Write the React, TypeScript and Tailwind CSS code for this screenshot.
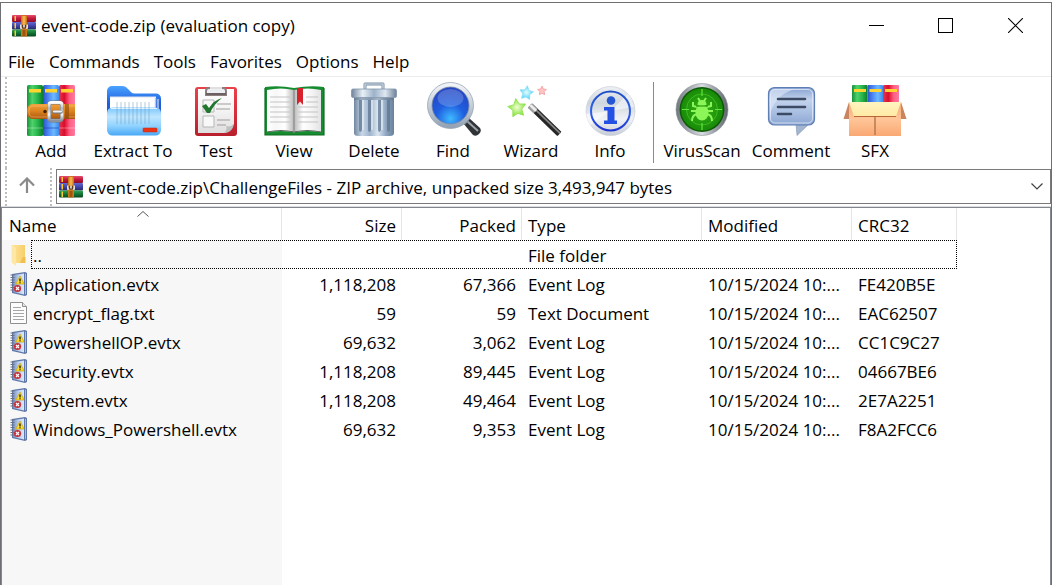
import type { ReactNode } from "react";

function Gradient({ id, stops, vertical }: { id: string; stops: string[]; vertical?: boolean }) {
  return (
    <linearGradient id={id} x1="0" y1="0" x2={vertical ? "0" : "1"} y2={vertical ? "1" : "0"}>
      {stops.map((color, i) => (
        <stop key={i} offset={i / (stops.length - 1)} stopColor={color} />
      ))}
    </linearGradient>
  );
}

function SharedDefs() {
  return (
    <svg width="0" height="0" className="absolute" aria-hidden="true">
      <defs>
        <Gradient id="bookGreen" stops={["#17913a", "#4fd26b", "#28b44b", "#0b7d2b"]} />
        <Gradient id="bookBlue" stops={["#2b54c8", "#4c86f5", "#6eb9ff", "#3b8cf0"]} />
        <Gradient id="bookRed" stops={["#e8384f", "#d90c2c", "#ff5f83", "#ff7ba0"]} />
        <Gradient id="belt" vertical stops={["#f2a33c", "#d9811e", "#a9560f"]} />
        <Gradient id="metal" vertical stops={["#ffffff", "#b4b8bf", "#f4f5f7", "#8d929b"]} />
        <Gradient id="folderBack" vertical stops={["#4aa3ff", "#1c5fe0", "#2d55d8"]} />
        <Gradient id="folderFront" vertical stops={["#7cc7ff", "#c0e6ff", "#8ed2ff", "#49a8f5"]} />
        <Gradient id="clipRed" vertical stops={["#e8424a", "#d8303a", "#b81f2c"]} />
        <Gradient id="paper" vertical stops={["#ffffff", "#f3f3f3", "#dedede"]} />
        <Gradient id="pageLeft" stops={["#ffffff", "#f7f7f7", "#ffffff", "#b8b8b8"]} />
        <Gradient id="pageRight" stops={["#b8b8b8", "#ffffff", "#f4f4f4", "#e2e2e2"]} />
        <Gradient id="can" stops={["#71869f", "#c9d8e8", "#9fb4cc", "#dbe6f1", "#8ea6c1", "#6a809b"]} />
        <Gradient id="canLid" stops={["#70839b", "#e8f0f7", "#9db2c9", "#dfe8f1", "#6c8098"]} />
        <Gradient id="glassRim" vertical stops={["#f6f8fa", "#c5ced8", "#90a0b2"]} />
        <radialGradient id="lens" cx=".5" cy=".85" r=".85">
          <stop offset="0" stopColor="#3fbaff" />
          <stop offset=".45" stopColor="#1f5fe0" />
          <stop offset="1" stopColor="#2443c0" />
        </radialGradient>
        <radialGradient id="starGreen"><stop offset="0" stopColor="#efffd0" /><stop offset="1" stopColor="#86e23c" /></radialGradient>
        <radialGradient id="starBlue"><stop offset="0" stopColor="#e5fcff" /><stop offset="1" stopColor="#5bd5f5" /></radialGradient>
        <Gradient id="disc" vertical stops={["#eef1f5", "#d0d6de", "#f0f2f5", "#c7cdd6"]} />
        <Gradient id="infoBlue" vertical stops={["#1e4fc4", "#2d5ff0", "#1f35d0"]} />
        <Gradient id="virusRim" stops={["#6f767d", "#d9dde1", "#5c6268"]} />
        <radialGradient id="virusGreen"><stop offset="0" stopColor="#34b416" /><stop offset="1" stopColor="#188a08" /></radialGradient>
        <Gradient id="bubble" vertical stops={["#86a2d2", "#c3d3ec", "#a9bfe2", "#8ca6d2"]} />
        <Gradient id="boxFront" vertical stops={["#f5a870", "#ffc598", "#f9a873"]} />
        <Gradient id="boxFlap" vertical stops={["#fff4c0", "#ffe9a4"]} />
        <Gradient id="barRed" vertical stops={["#e8506c", "#c2183c", "#8c0d2a"]} />
        <Gradient id="barBlue" vertical stops={["#6468d0", "#4146a8", "#232763"]} />
        <Gradient id="barGreen" vertical stops={["#2fa352", "#137535", "#07461c"]} />
        <Gradient id="folderSmall" stops={["#ffe49a", "#f7cf6a"]} />
        <Gradient id="logCover" stops={["#7b93c4", "#b9cdec", "#dce8f8"]} />
      </defs>
    </svg>
  );
}

function Glyph({ children }: { children: ReactNode }) {
  return (
    <svg viewBox="0 0 64 54" className="h-[54px] w-16 shrink-0" aria-hidden="true">
      {children}
    </svg>
  );
}

const AddIcon = () => (
  <Glyph>
    <rect x="8" y="3" width="16" height="51" rx="1.500" fill="url(#bookGreen)" />
    <rect x="24" y="3" width="16" height="51" rx="1.500" fill="url(#bookBlue)" />
    <rect x="40" y="3" width="16" height="51" rx="1.500" fill="url(#bookRed)" />
    <path d="M10 7h12v3.500h-12zM26 7h12v3.500h-12zM42 7h12v3.500h-12z" fill="#ffd42e" />
    <path d="M8 46h16M40 46h16" stroke="#fff" strokeOpacity=".35" />
    <path d="M24 46h16" stroke="#1c3da8" strokeOpacity=".6" />
    <path d="M14 22h42v15H14q-6 0-6-7.500t6-7.500z" fill="url(#belt)" />
    <path d="M14 24q-4 0-4 5.500t4 5.500h18M14 24h18M49 24h7M49 35h7" fill="none" stroke="#ffc67a" strokeOpacity=".7" strokeWidth=".7" />
    <path d="M46 22h4v15h-4z" fill="#8a460b" opacity=".6" />
    <circle cx="26" cy="29.500" r="1.700" fill="#3b2208" />
    <rect x="30" y="20.500" width="13" height="18" rx="2.500" fill="none" stroke="#73767c" strokeWidth="4" />
    <rect x="30" y="20.500" width="13" height="18" rx="2.500" fill="none" stroke="url(#metal)" strokeWidth="3" />
    <path d="M35 30h7" stroke="#74777c" strokeWidth="3.500" strokeLinecap="round" />
    <path d="M35 29.500h7" stroke="#f0f1f3" strokeWidth="2.200" strokeLinecap="round" />
  </Glyph>
);

const ExtractIcon = () => (
  <Glyph>
    <path d="M6 9a5 5 0 0 1 5-5h10c3 0 4 1 6 3l3 3q1 1.500 4 1.500h21a5 5 0 0 1 5 5V38H6z" fill="url(#folderBack)" />
    <path d="M9 15h46v24H9z" fill="#fff" />
    <path d="M54.500 16v12M57 17v12" stroke="#b9c8dd" strokeWidth="1.500" />
    <path d="M9 15h46" stroke="#dbe3ee" />
    <rect x="6" y="25.500" width="54" height="28" rx="5.500" fill="url(#folderFront)" />
    <path d="M10 26.500h46" stroke="#e5f5ff" strokeWidth="1.200" />
    <path d="M16 20v22M20 20v22M24 20v22M28 20v22M32 20v22M36 20v22M40 20v22M44 20v22M48 20v22" stroke="#6f9ab8" strokeOpacity=".4" strokeWidth="1.300" />
    <rect x="42" y="46" width="14" height="4" rx=".6" fill="#ea3316" stroke="#c92b12" strokeWidth=".5" />
  </Glyph>
);

const TestIcon = () => (
  <Glyph>
    <rect x="11" y="5" width="42" height="49" rx="3" fill="url(#clipRed)" />
    <path d="M14 7h36v35l-8 9H14z" fill="url(#paper)" />
    <path d="M50 42c-1 6-5 9-10 9 3-3 3-5 2-7 3 1 6 0 8-2z" fill="#bfbfbf" />
    <path d="M22 13V9a3 3 0 0 1 3-3h14a3 3 0 0 1 3 3v4z" fill="#eceff1" stroke="#8c7f80" strokeWidth="2" />
    <path d="M22 12h20" stroke="#6b6163" strokeWidth="2" />
    <path d="M26 6h12" stroke="#fff" strokeWidth="1.500" />
    <path d="M19 18h11v12H19zM19 34h11v11H19z" fill="#f8f8f8" stroke="#b7b7b7" />
    <path d="M33 22h14M32 27h14M33 38h13M33 43h9" stroke="#a59c9c" strokeWidth="1.200" />
    <path d="M18 24l4-2 3 4q5-8 13-10-8 6-12 15h-3z" fill="#22772f" />
  </Glyph>
);

const ViewIcon = () => (
  <Glyph>
    <path d="M3 5q14-2 29 1 16-3 30-1v48H3z" fill="#168c30" />
    <path d="M3 6v47h59V6" fill="none" stroke="#0e6c22" strokeWidth="1.200" />
    <path d="M5 8q14-3 27 0v42q-13-2-27 0z" fill="url(#pageLeft)" />
    <path d="M32 8q14-3 27 0v42q-13-2-27 0z" fill="url(#pageRight)" />
    <path d="M5 50q14-3 27 0 13-3 27 0" fill="none" stroke="#5f5f5f" strokeWidth="1.200" />
    <path d="M32 8v43" stroke="#8b8b8b" strokeWidth="1.200" />
    <path d="M8 15h20M8 20h20M8 25h20M8 30h20M8 35h20M8 40h20M44 15h12M44 20h12M36 25h20M36 30h20M36 35h20M36 40h20" stroke="#c3c3c3" strokeWidth="1.200" />
    <path d="M35 6h6v17l-3-3.500-3 3.500z" fill="#d8212a" />
  </Glyph>
);

const DeleteIcon = () => (
  <Glyph>
    <path d="M23 8V2h18v6" fill="none" stroke="#7c8fa5" strokeWidth="3" strokeLinejoin="round" />
    <path d="M23 8V2h18v6" fill="none" stroke="#d2dde8" strokeWidth="1.200" />
    <path d="M12 14h40v37q0 3-4 3H16q-4 0-4-3z" fill="url(#can)" />
    <path d="M17 18v30q1 4 3 0V18zM26 18v30q1 4 3 0V18zM36 18v30q1 4 3 0V18zM45 18v30q1 4 3 0V18z" fill="#5e7590" opacity=".75" />
    <path d="M21 18v30M30 18v30M40 18v30" stroke="#e8f0f8" strokeWidth="1.200" />
    <rect x="9.500" y="7" width="45" height="8.500" rx="1.500" fill="url(#canLid)" stroke="#8194aa" strokeWidth=".8" />
    <path d="M12 17h40" stroke="#53677e" strokeOpacity=".5" strokeWidth="1.500" />
  </Glyph>
);

const FindIcon = () => (
  <Glyph>
    <path d="M42 41l6-5 11 10q2 3-1 6t-6 1z" fill="#303338" />
    <path d="M46 39l11 10" stroke="#9ea3aa" strokeWidth="2" />
    <path d="M41 40l5-5 3 2-5 6z" fill="#777d86" />
    <circle cx="29.500" cy="23.500" r="23" fill="url(#glassRim)" stroke="#97a5b5" strokeWidth=".8" />
    <circle cx="29.500" cy="23.500" r="18.500" fill="url(#lens)" stroke="#7b8aa5" strokeWidth=".8" />
    <ellipse cx="29.500" cy="16" rx="13" ry="9" fill="#fff" opacity=".2" />
  </Glyph>
);

const STAR = "M0-10L3-3.500 10-2.500 5 2.500 6 9.500 0 6.500-6 9.500-5 2.500-10-2.500-3-3.500z";

const WizardIcon = () => (
  <Glyph>
    <path d={STAR} transform="translate(18 25.500) rotate(-8) scale(.9)" fill="url(#starGreen)" stroke="#95e35a" strokeWidth="1" />
    <path d={STAR} transform="translate(27.500 10.500) rotate(8) scale(.68)" fill="url(#starBlue)" stroke="#7ddcf5" strokeWidth="1" />
    <path d={STAR} transform="translate(43 8.500) scale(.44)" fill="#ffc4c4" stroke="#f08d8d" strokeWidth="1.500" />
    <g transform="translate(31 23.500) rotate(44)">
      <rect x="0" y="-3" width="41" height="6" rx="1" fill="#262626" />
      <rect x="0" y="-1.800" width="41" height="1.800" fill="#858585" />
      <rect x="0" y="-3" width="8" height="6" fill="#a2a2a2" />
      <rect x="0" y="-1.800" width="8" height="2.600" fill="#eeeeee" />
    </g>
  </Glyph>
);

const InfoIcon = () => (
  <Glyph>
    <circle cx="32.500" cy="29" r="24.500" fill="url(#disc)" stroke="#c4cad3" strokeWidth=".6" />
    <path d="M32.500 29L50 12a24 24 0 0 1 6 13zM32.500 29L12 43a24 24 0 0 1-4-11z" fill="#fff" opacity=".5" />
    <circle cx="32.500" cy="29" r="19.500" fill="none" stroke="url(#infoBlue)" strokeWidth="2" />
    <circle cx="33" cy="18.500" r="4.300" fill="#2456d4" />
    <path d="M26 25h10.500v13.500H39V42H26v-3.500h3.500V28.500H26z" fill="#2550e4" />
  </Glyph>
);

const VirusIcon = () => (
  <Glyph>
    <circle cx="32" cy="27.500" r="26" fill="url(#virusRim)" stroke="#8b9197" strokeWidth=".6" />
    <circle cx="32" cy="27.500" r="22.500" fill="#0d5a06" />
    <circle cx="32" cy="27.500" r="21" fill="url(#virusGreen)" />
    <circle cx="32" cy="27.500" r="15.500" fill="none" stroke="#4bd22c" strokeOpacity=".6" />
    <path d="M32 7v7M32 41v7M12 27.500h7M45 27.500h7" stroke="#63e63c" strokeWidth="1.200" />
    <path d="M27 25l-4-1v-4M37 25l4-1v-4M27 29h-6M37 29h6M27 32q-5 1-5 7M37 32q5 1 5 7M30 19l-2-3M34 19l2-3" fill="none" stroke="#8cf558" strokeWidth="2" />
    <ellipse cx="32" cy="30.500" rx="6.500" ry="8" fill="#8cf558" />
    <path d="M27.500 23q0-5 4.500-5t4.500 5z" fill="#8cf558" />
    <path d="M26 24h12" stroke="#279a12" strokeWidth="1.200" />
  </Glyph>
);

const CommentIcon = () => (
  <Glyph>
    <path d="M37 42h13L38 53.500z" fill="#a3b5cf" stroke="#8196b5" strokeWidth=".6" />
    <rect x="9.500" y="5.500" width="46" height="37.500" rx="6" fill="url(#bubble)" stroke="#5f7fb4" strokeWidth="1.200" />
    <path d="M11 32V12q0-5 5-5h20Q17 12 11 32z" fill="#dce7f7" opacity=".65" />
    <rect x="11.500" y="7.500" width="42" height="33.500" rx="4.500" fill="none" stroke="#e1eaf8" strokeOpacity=".8" />
    <path d="M19 17h27M19 25h27M19 32h13" stroke="#3c4b63" strokeWidth="2.600" strokeLinecap="round" />
  </Glyph>
);

const SfxIcon = () => (
  <Glyph>
    <rect x="9" y="3" width="15.500" height="20" rx="1" fill="url(#bookGreen)" />
    <rect x="24.500" y="3" width="15.500" height="20" rx="1" fill="url(#bookBlue)" />
    <rect x="40" y="3" width="16" height="20" rx="1" fill="url(#bookRed)" />
    <path d="M11 7h12v3H11zM26.500 7h12v3h-12zM42 7h12v3H42z" fill="#ffd42e" />
    <path d="M6 20L.5 37H8zM58 20l5.500 17H56z" fill="#c98560" />
    <path d="M6 20h52v34H6z" fill="url(#boxFront)" />
    <path d="M32 35v18" stroke="#b9784e" strokeWidth="1.500" />
    <path d="M6 20h52l-5 14.500H11z" fill="url(#boxFlap)" />
    <path d="M11 34.500h42" stroke="#b9673a" strokeWidth="1.200" />
  </Glyph>
);

const ArchiveIcon = () => (
  <svg viewBox="0 0 24 22" className="h-[22px] w-6 shrink-0" aria-hidden="true">
    <rect x="0" y="0" width="24" height="7" rx="1" fill="url(#barRed)" />
    <rect x="0" y="7" width="24" height="7.500" rx="1" fill="url(#barBlue)" />
    <rect x="0" y="14.500" width="24" height="7" rx="1" fill="url(#barGreen)" />
    <path d="M2.500 1h1.500v5H2.500zM2.500 8h1.500v5.500H2.500zM2.500 15.500h1.500V21H2.500z" fill="#ffcb2e" />
    <path d="M9 1q3-2 6 0v20.500H9z" fill="#c97a1b" />
    <path d="M10.500 1h3v8h-3z" fill="#f3b04a" />
    <path d="M10.500 15h3v6h-3z" fill="#9c5510" />
    <path d="M8.700 9.500v3.500h2M15.300 9.500v3.500h-2" fill="none" stroke="#e2e2e2" strokeWidth="1.400" />
    <path d="M10 10h4v3.500h-4z" fill="#5b3a1e" />
    <path d="M12 9.500v3" stroke="#fff" strokeWidth="1.400" />
  </svg>
);

const FolderSmall = () => (
  <svg viewBox="0 0 20 24" className="h-6 w-5 shrink-0" aria-hidden="true">
    <path d="M3 2h13v18H3z" fill="url(#folderSmall)" />
    <path d="M14 14h2.500v6H11z" fill="#f0bf4d" />
    <path d="M2.500 2L7 5v18l-4.500-3.500z" fill="#ffe8a6" />
  </svg>
);

const EventLogSmall = () => (
  <svg viewBox="0 0 20 24" className="h-6 w-5 shrink-0" aria-hidden="true">
    <path d="M3 2l13-2 2 1v22l-2 1-13-3z" fill="#5e76a8" />
    <path d="M4 3l11-1.500v21L4 20z" fill="url(#logCover)" />
    <path d="M16 1.500l1 .5v20l-1 .5z" fill="#a8bde0" />
    <path d="M1.500 3h4M1.500 5.500h4M1.500 8h4M1.500 10.500h4M1.500 13h4M1.500 15.500h4M1.500 18h4" stroke="#6a7280" strokeWidth="1" />
    <path d="M11 4l4.200 8H6.800z" fill="#ffe02e" stroke="#c9a20c" strokeWidth=".7" strokeLinejoin="round" />
    <path d="M11 6.500v3M11 10.300v1" stroke="#111" strokeWidth="1.300" />
    <circle cx="8.500" cy="16.500" r="3.600" fill="#c8303a" />
    <path d="M7 15l3 3M10 15l-3 3" stroke="#fff" strokeWidth="1.200" />
  </svg>
);

const TextSmall = () => (
  <svg viewBox="0 0 20 24" className="h-6 w-5 shrink-0" aria-hidden="true">
    <path d="M1.500 1.500h12l4 4v17h-16z" fill="#fcfcfc" stroke="#8f8f8f" />
    <path d="M13.500 1.500v4h4" fill="#e8e8e8" stroke="#8f8f8f" />
    <path d="M4 6.500h8M4 9.500h11M4 12.500h11M4 15.500h11M4 18.500h11" stroke="#a6a6a6" />
  </svg>
);

const MENUS = ["File", "Commands", "Tools", "Favorites", "Options", "Help"];

const TOOLS = [
  { label: "Add", width: "w-[78px]", icon: <AddIcon /> },
  { label: "Extract To", width: "w-[86px]", icon: <ExtractIcon /> },
  { label: "Test", width: "w-20", icon: <TestIcon /> },
  { label: "View", width: "w-[76px]", icon: <ViewIcon /> },
  { label: "Delete", width: "w-[84px]", icon: <DeleteIcon /> },
  { label: "Find", width: "w-[74px]", icon: <FindIcon /> },
  { label: "Wizard", width: "w-[82px]", icon: <WizardIcon /> },
  { label: "Info", width: "w-[76px]", icon: <InfoIcon /> },
];

const EXTRA_TOOLS = [
  { label: "VirusScan", width: "w-[86px]", icon: <VirusIcon /> },
  { label: "Comment", width: "w-[92px]", icon: <CommentIcon /> },
  { label: "SFX", width: "w-[76px]", icon: <SfxIcon /> },
];

const DATE = "10/15/2024 10:...";

const FILES = [
  { name: "Application.evtx", size: "1,118,208", packed: "67,366", type: "Event Log", crc: "FE420B5E" },
  { name: "encrypt_flag.txt", size: "59", packed: "59", type: "Text Document", crc: "EAC62507" },
  { name: "PowershellOP.evtx", size: "69,632", packed: "3,062", type: "Event Log", crc: "CC1C9C27" },
  { name: "Security.evtx", size: "1,118,208", packed: "89,445", type: "Event Log", crc: "04667BE6" },
  { name: "System.evtx", size: "1,118,208", packed: "49,464", type: "Event Log", crc: "2E7A2251" },
  { name: "Windows_Powershell.evtx", size: "69,632", packed: "9,353", type: "Event Log", crc: "F8A2FCC6" },
];

function ToolButton({ label, width, icon }: { label: string; width: string; icon: ReactNode }) {
  return (
    <button type="button" className={`flex shrink-0 flex-col items-center gap-[5px] ${width}`}>
      {icon}
      <span className="whitespace-nowrap leading-5">{label}</span>
    </button>
  );
}

function Grip() {
  return <div className="w-0 shrink-0 self-stretch border-l-2 border-dotted border-[#bdbdbd]" />;
}

export default function App() {
  return (
    <div className="flex min-h-screen flex-col bg-white pr-[3px] pt-0.5 font-['Open_Sans','Noto_Sans',sans-serif] text-[17px] leading-5 text-black">
      <SharedDefs />
      <div className="flex grow flex-col border-x border-t border-[#6f7073]">
        <header className="flex h-[45px] items-center pl-[11px]">
          <ArchiveIcon />
          <h1 className="grow pl-[5px]">event-code.zip (evaluation copy)</h1>
          <button type="button" aria-label="Minimize" className="flex h-full w-[69px] items-center justify-center">
            <span className="h-px w-[15px] bg-black" />
          </button>
          <button type="button" aria-label="Maximize" className="flex h-full w-[69px] items-center justify-center">
            <span className="size-[15px] border border-black" />
          </button>
          <button type="button" aria-label="Close" className="flex h-full w-[71px] items-center justify-center">
            <svg viewBox="0 0 15 15" className="size-[15px]" aria-hidden="true">
              <path d="M0 0l15 15M15 0L0 15" stroke="#000" strokeWidth="1.100" />
            </svg>
          </button>
        </header>

        <nav className="flex h-7 items-center">
          {MENUS.map((menu) => (
            <button key={menu} type="button" className="px-[7px]">
              {menu}
            </button>
          ))}
        </nav>

        <div className="flex h-[92px] border-t border-[#ededed] pl-1">
          <Grip />
          <div className="flex items-start pl-[5px] pt-[5px]">
            {TOOLS.map((tool) => (
              <ToolButton key={tool.label} {...tool} />
            ))}
            <div className="mx-[5px] h-[81px] w-px bg-[#8a8a8a]" />
            {EXTRA_TOOLS.map((tool) => (
              <ToolButton key={tool.label} {...tool} />
            ))}
          </div>
        </div>

        <div className="flex h-[39px] border-b border-[#dcdcdc] pl-1">
          <Grip />
          <button type="button" aria-label="Up one level" className="flex w-[43px] items-center justify-center pb-1 pr-[3px]">
            <svg viewBox="0 0 16 16" className="size-4" aria-hidden="true">
              <path d="M8 16V1.500M1 8.500l7-7 7 7" fill="none" stroke="#8a8a8a" strokeWidth="2.200" />
            </svg>
          </button>
          <Grip />
          <div className="mb-0.5 mt-px ml-1 flex grow items-center border border-[#7a7a7a] pl-0.5">
            <ArchiveIcon />
            <input
              aria-label="Current path"
              readOnly
              value="event-code.zip\ChallengeFiles - ZIP archive, unpacked size 3,493,947 bytes"
              className="ml-[5px] h-full min-w-0 grow bg-transparent pt-0.5 outline-none"
            />
            <button type="button" aria-label="Show path history" className="flex h-full w-[26px] items-center justify-center">
              <svg viewBox="0 0 12 7" className="h-[7px] w-3" aria-hidden="true">
                <path d="M.5.500L6 6 11.500.500" fill="none" stroke="#404040" strokeWidth="1.200" />
              </svg>
            </button>
          </div>
        </div>

        <main className="flex grow flex-col border-x border-t border-[#828790] bg-[linear-gradient(to_right,#f7f7f7_280px,#ffffff_280px)]">
          <table className="w-full table-fixed border-separate border-spacing-0 text-left">
            <colgroup>
              <col className="w-[280px]" />
              <col className="w-[120px]" />
              <col className="w-[120px]" />
              <col className="w-[180px]" />
              <col className="w-[150px]" />
              <col className="w-[105px]" />
              <col />
            </colgroup>
            <thead>
              <tr className="h-8 bg-white *:border-r *:border-[#e5e5e5] *:pt-1 *:font-normal">
                <th className="relative pl-[7px]">
                  Name
                  <svg viewBox="0 0 12 6" className="absolute left-[135px] top-[3px] h-1.5 w-3" aria-hidden="true">
                    <path d="M.5 5.500L6 .500l5.500 5" fill="none" stroke="#555" />
                  </svg>
                </th>
                <th className="pr-[5px] text-right">Size</th>
                <th className="pr-[5px] text-right">Packed</th>
                <th className="pl-1.5">Type</th>
                <th className="pl-1.5">Modified</th>
                <th className="pl-1.5">CRC32</th>
                <td className="border-r-0!" />
              </tr>
            </thead>
            <tbody>
              <tr className="h-[29px]">
                <td className="relative pl-[7px]">
                  <div className="flex items-center gap-1">
                    <FolderSmall />
                    <span className="pt-0.5">..</span>
                  </div>
                  <div className="pointer-events-none absolute inset-y-0 left-[29px] w-[926px] border border-dotted border-black" />
                </td>
                <td />
                <td />
                <td className="pl-1.5 pt-0.5">File folder</td>
                <td />
                <td />
                <td />
              </tr>
              {FILES.map((file) => (
                <tr key={file.name} className="h-[29px] whitespace-nowrap *:pt-0.5">
                  <td className="pl-[7px] pt-0!">
                    <div className="flex items-center gap-1">
                      {file.name.endsWith(".txt") ? <TextSmall /> : <EventLogSmall />}
                      <span className="pt-0.5">{file.name}</span>
                    </div>
                  </td>
                  <td className="pr-1.5 text-right">{file.size}</td>
                  <td className="pr-1.5 text-right">{file.packed}</td>
                  <td className="pl-1.5">{file.type}</td>
                  <td className="pl-1.5">{DATE}</td>
                  <td className="pl-1.5">{file.crc}</td>
                  <td />
                </tr>
              ))}
            </tbody>
          </table>
        </main>
      </div>
    </div>
  );
}
